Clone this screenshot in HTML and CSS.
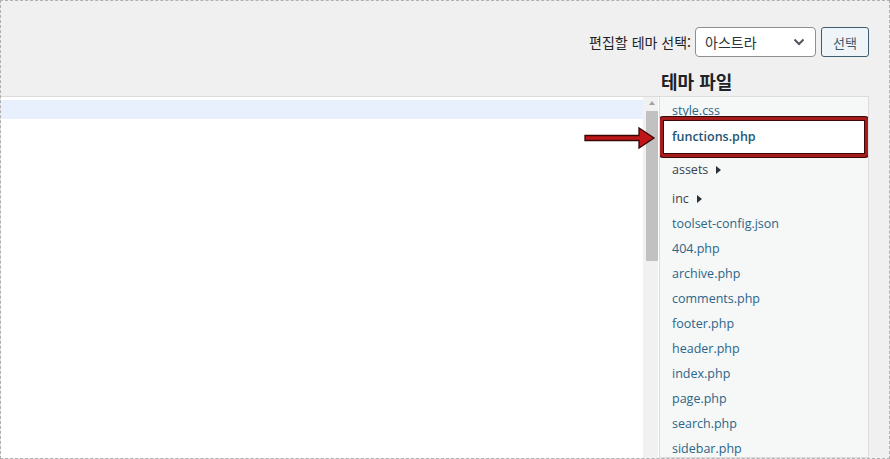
FILE: index.html
```html
<!DOCTYPE html>
<html lang="ko">
<head>
<meta charset="utf-8">
<title>테마 파일 편집기</title>
<link rel="stylesheet" href="styles.css">
</head>
<body>
<div class="frame">
  <div class="theme-select">
    <label class="select-label">편집할 테마 선택:</label>
    <div class="select">
      <span>아스트라</span>
      <svg class="chevron" width="14" height="14" viewBox="0 0 14 14"><path d="M2.5 4.5 L7 9 L11.5 4.5" fill="none" stroke="#50575e" stroke-width="2"/></svg>
    </div>
    <button class="btn">선택</button>
  </div>

  <div class="heading-row">
    <div></div>
    <h2 class="files-title">테마 파일</h2>
  </div>

  <div class="main">
    <div class="editor">
      <div class="code">
        <div class="line active"></div>
      </div>
      <div class="scrollbar">
        <div class="scroll-up"></div>
        <div class="thumb"></div>
      </div>
    </div>
    <div class="sidebar">
      <ul class="files">
        <li class="file first"><a>style.css</a></li>
        <li class="file current"><a>functions.php</a></li>
        <li class="file folder"><span>assets</span><i class="caret"></i></li>
        <li class="file folder second"><span>inc</span><i class="caret"></i></li>
        <li class="file"><a>toolset-config.json</a></li>
        <li class="file"><a>404.php</a></li>
        <li class="file"><a>archive.php</a></li>
        <li class="file"><a>comments.php</a></li>
        <li class="file"><a>footer.php</a></li>
        <li class="file"><a>header.php</a></li>
        <li class="file"><a>index.php</a></li>
        <li class="file"><a>page.php</a></li>
        <li class="file"><a>search.php</a></li>
        <li class="file"><a>sidebar.php</a></li>
      </ul>
    </div>
  </div>

  <svg class="pointer" width="80" height="30" viewBox="0 0 80 30">
    <polygon points="1,9.5 55,9.5 55,2 70,12 55,22 55,14.5 1,14.5" fill="#c0161a" stroke="#3a0505" stroke-width="1.3" stroke-linejoin="miter"/>
  </svg>
</div>
</body>
</html>
```

FILE: styles.css
```css
* { box-sizing: border-box; }

html, body {
  margin: 0;
  padding: 0;
}

body {
  font-family: "Open Sans", "Noto Sans CJK KR", sans-serif;
  font-size: 12.5px;
  color: #1d2327;
  background: #f0f0f1;
}

.frame {
  position: relative;
  width: 890px;
  height: 459px;
  border: 1px dashed #b0b0b0;
  background: #f0f0f1;
  overflow: hidden;
  display: flex;
  flex-direction: column;
}

.theme-select {
  display: flex;
  justify-content: flex-end;
  align-items: center;
  padding: 26px 20px 0 0;
}

.select-label {
  font-family: "Noto Sans CJK KR", sans-serif;
  font-size: 14px;
  color: #1d2327;
  margin-right: 4px;
}

.select {
  width: 121px;
  height: 30px;
  border: 1px solid #8c8f94;
  border-radius: 4px;
  background: #fff;
  display: flex;
  align-items: center;
  justify-content: space-between;
  padding: 0 9px 0 9px;
  font-family: "Noto Sans CJK KR", sans-serif;
  font-size: 14px;
  color: #2c3338;
}

.chevron { display: block; }

.btn {
  margin-left: 5px;
  width: 48px;
  height: 30px;
  border: 1px solid #3f5d70;
  border-radius: 3px;
  background: #eef4f7;
  color: #3d5a6c;
  font-family: "Noto Sans CJK KR", sans-serif;
  font-size: 13px;
  padding: 0;
}

.heading-row {
  display: grid;
  grid-template-columns: 1fr 210px;
  padding-right: 20px;
}

.files-title {
  margin: 12px 0 3px 2px;
  font-family: "Noto Sans CJK KR", sans-serif;
  font-size: 18px;
  font-weight: 700;
  line-height: 24px;
  color: #1d2327;
}

.main {
  flex: 1;
  display: grid;
  grid-template-columns: 1fr 210px;
  padding-right: 20px;
  min-height: 0;
}

.editor {
  display: flex;
  background: #fff;
  border-top: 1px solid #dcdcde;
  padding-right: 1px;
}

.code {
  flex: 1;
  padding-top: 3px;
}

.line {
  height: 19px;
}

.line.active {
  background: #e8f0fd;
}

.scrollbar {
  width: 15px;
  background: #f1f1f1;
  position: relative;
  padding-left: 3px;
}

.scroll-up {
  width: 0;
  height: 0;
  margin: 4px 0 0 3px;
  border-left: 3.5px solid transparent;
  border-right: 3.5px solid transparent;
  border-bottom: 4px solid #a3a3a3;
}

.thumb {
  margin-top: 6px;
  width: 12px;
  height: 150px;
  background: #c1c1c1;
}

.sidebar {
  border: 1px solid #dcdcde;
  background: #f6f7f7;
  overflow: hidden;
}

.files {
  list-style: none;
  margin: 0;
  padding: 0;
}

.file {
  height: 25px;
  line-height: 25px;
  padding-left: 12px;
  color: #2a6689;
  white-space: nowrap;
}

.file a { color: #2a6689; }

.file.first {
  height: 20px;
  line-height: 27px;
}

.file.current {
  position: relative;
  z-index: 1;
  height: 40px;
  line-height: 34px;
  padding-left: 9px;
  background: #fff;
  border: 3px solid #a41b1b;
  border-radius: 3px;
  box-shadow: 0 0 0 1px #3b0707, inset 0 0 0 1px #3b0707;
}

.file.current a {
  color: #1e5573;
  font-weight: 600;
}

.file.folder {
  height: 27px;
  line-height: 26px;
  color: #3c434a;
}

.file.folder.second {
  line-height: 29px;
}

.caret {
  display: inline-block;
  vertical-align: middle;
  margin: -2px 0 0 8px;
  width: 0;
  height: 0;
  border-top: 4px solid transparent;
  border-bottom: 4px solid transparent;
  border-left: 5px solid #2c3338;
}

.pointer {
  position: absolute;
  left: 583px;
  top: 125px;
}
```
